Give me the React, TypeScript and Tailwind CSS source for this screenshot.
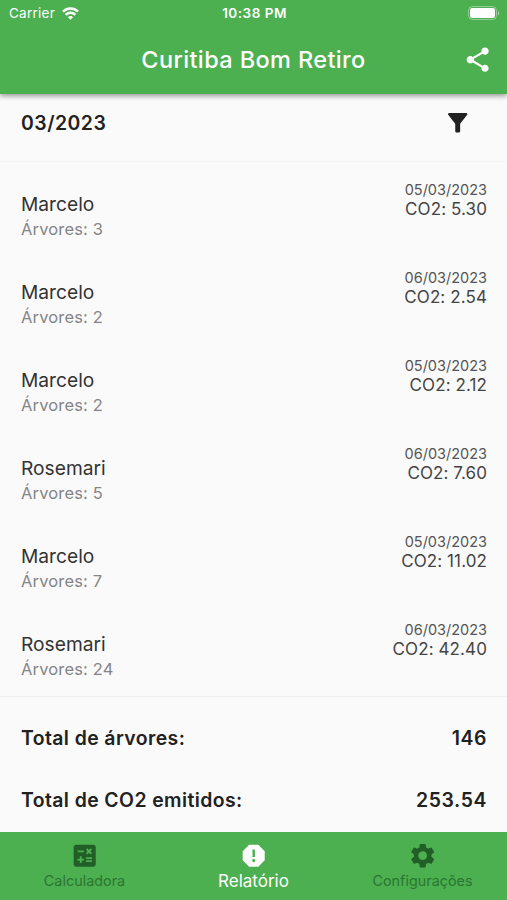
import { MdCalculate, MdFilterAlt, MdReport, MdSettings, MdShare } from 'react-icons/md';

const entries = [
  { name: 'Marcelo', trees: 3, date: '05/03/2023', co2: '5.30' },
  { name: 'Marcelo', trees: 2, date: '06/03/2023', co2: '2.54' },
  { name: 'Marcelo', trees: 2, date: '05/03/2023', co2: '2.12' },
  { name: 'Rosemari', trees: 5, date: '06/03/2023', co2: '7.60' },
  { name: 'Marcelo', trees: 7, date: '05/03/2023', co2: '11.02' },
  { name: 'Rosemari', trees: 24, date: '06/03/2023', co2: '42.40' },
];

const totals = [
  ['Total de árvores:', '146'],
  ['Total de CO2 emitidos:', '253.54'],
];

const tabs = [
  { label: 'Calculadora', icon: MdCalculate },
  { label: 'Relatório', icon: MdReport },
  { label: 'Configurações', icon: MdSettings },
];

function StatusBar() {
  return (
    <div className="grid h-7 grid-cols-3 items-center pr-[7px] pl-[9px] text-[13.5px] leading-none">
      <div className="flex items-center gap-[7px]">
        <span className="tracking-[0.25px]">Carrier</span>
        <svg className="mb-px" width="17" height="13" viewBox="0 0 17 13" fill="none" stroke="currentColor" strokeWidth="2.5">
          <path d="M1 4.6a10.6 10.6 0 0 1 15 0" />
          <path d="M3.7 7.8a6.8 6.8 0 0 1 9.6 0" />
          <path d="M8.5 12.8 5.9 10.2a3.7 3.7 0 0 1 5.2 0z" fill="currentColor" stroke="none" />
        </svg>
      </div>
      <span className="text-center font-semibold tracking-[0.5px] whitespace-nowrap">10:38 PM</span>
      <svg className="mb-[2px] justify-self-end" width="32" height="14" viewBox="0 0 32 14">
        <rect x="0.5" y="0.5" width="28" height="13" rx="4" fill="none" stroke="white" strokeOpacity="0.4" />
        <rect x="2" y="2" width="25" height="10" rx="2.2" fill="white" />
        <path d="M30 5v4.4c1.8-.8 1.8-3.6 0-4.4z" fill="white" fillOpacity="0.45" />
      </svg>
    </div>
  );
}

export default function App() {
  return (
    <div className="flex h-[900px] w-[507px] flex-col overflow-hidden bg-[#fafafa] font-['Inter','Liberation_Sans',sans-serif] text-[#212121]">
      <header className="z-10 h-[94px] shrink-0 bg-[#4caf50] text-white shadow-[0_2px_5px_rgba(0,0,0,0.4)]">
        <StatusBar />
        <div className="grid h-16 grid-cols-[48px_1fr_48px] items-center px-[5px]">
          <span />
          <h1 className="text-center text-[23.5px] font-medium tracking-[0.38px]">Curitiba Bom Retiro</h1>
          <button className="justify-self-center">
            <MdShare size={29.4} />
          </button>
        </div>
      </header>

      <div className="flex h-[68px] shrink-0 items-start justify-between border-b border-[#f4f4f4] pr-[34.5px] pl-[21px]">
        <h2 className="pt-[15px] text-[19.4px] leading-7 font-semibold tracking-[0.5px]">03/2023</h2>
        <button className="pt-[14px]">
          <MdFilterAlt size={29.4} />
        </button>
      </div>

      <ul className="h-[534px] shrink-0 pt-[6px]">
        {entries.map((entry, i) => (
          <li key={i} className="flex h-[88px] justify-between pr-5 pl-[21px]">
            <div className="pt-[23px]">
              <div className="text-[19.2px] leading-[26px] text-[#333]">{entry.name}</div>
              <div className="text-[16.5px] leading-[25px] tracking-[0.15px] text-[#858585]">Árvores: {entry.trees}</div>
            </div>
            <div className="pt-[13px] text-right">
              <div className="text-[14.5px] leading-[18px] text-[#555]">{entry.date}</div>
              <div className="text-[17px] leading-[20px] tracking-[0.1px] text-[#444]">CO2: {entry.co2}</div>
            </div>
          </li>
        ))}
      </ul>

      <div className="flex-1 border-t border-[#eee] pt-[11px]">
        {totals.map(([label, value]) => (
          <div
            key={label}
            className="flex h-[62px] items-center justify-between pr-5 pl-[21px] text-[19.4px] font-semibold tracking-[0.42px]"
          >
            <span>{label}</span>
            <span className="tracking-[0.6px]">{value}</span>
          </div>
        ))}
      </div>

      <nav className="grid h-[68px] shrink-0 grid-cols-3 bg-[#4caf50]">
        {tabs.map(({ label, icon: Icon }) => {
          const active = label === 'Relatório';
          return (
            <button key={label} className="flex flex-col items-center pt-[9px]">
              <Icon size={29.4} className={active ? 'text-white' : 'text-[#225e27]'} />
              <span
                className={
                  active
                    ? 'text-[17px] leading-[22px] text-white'
                    : 'text-[14.3px] leading-[22px] tracking-[0.05px] text-[#2b7630]'
                }
              >
                {label}
              </span>
            </button>
          );
        })}
      </nav>
    </div>
  );
}
